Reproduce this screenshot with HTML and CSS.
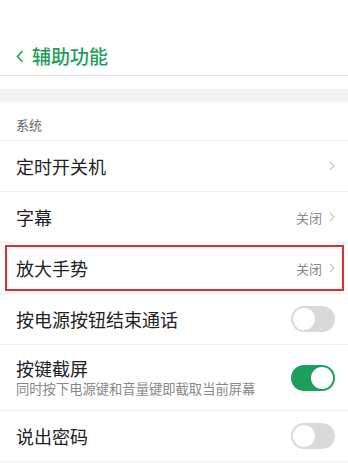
FILE: index.html
```html
<!DOCTYPE html>
<html lang="zh">
<head>
<meta charset="utf-8">
<link rel="stylesheet" href="styles.css">
</head>
<body>
<div class="page">
  <header class="topbar">
    <svg class="back" width="8" height="13" viewBox="0 0 8 13"><path d="M6.5 1 L1.5 6.5 L6.5 12" fill="none" stroke="#1f9d5c" stroke-width="1.6"/></svg>
    <span class="title">辅助功能</span>
  </header>
  <div class="spacer"></div>
  <div class="band"></div>
  <div class="section">系统</div>
  <div class="row">
    <span class="label">定时开关机</span>
    <span class="right"><svg class="chev" width="6" height="10" viewBox="0 0 6 10"><path d="M1 1 L5 5 L1 9" fill="none" stroke="#c4c4c4" stroke-width="1.1"/></svg></span>
  </div>
  <div class="row">
    <span class="label">字幕</span>
    <span class="right"><span class="value">关闭</span><svg class="chev" width="6" height="10" viewBox="0 0 6 10"><path d="M1 1 L5 5 L1 9" fill="none" stroke="#c4c4c4" stroke-width="1.1"/></svg></span>
  </div>
  <div class="row marked">
    <span class="label">放大手势</span>
    <span class="right"><span class="value">关闭</span><svg class="chev" width="6" height="10" viewBox="0 0 6 10"><path d="M1 1 L5 5 L1 9" fill="none" stroke="#c4c4c4" stroke-width="1.1"/></svg></span>
  </div>
  <div class="row">
    <span class="label">按电源按钮结束通话</span>
    <span class="toggle"><span class="knob"></span></span>
  </div>
  <div class="row tall">
    <span class="texts"><span class="label">按键截屏</span><span class="sub">同时按下电源键和音量键即截取当前屏幕</span></span>
    <span class="toggle on"><span class="knob"></span></span>
  </div>
  <div class="row">
    <span class="label">说出密码</span>
    <span class="toggle"><span class="knob"></span></span>
  </div>
</div>
</body>
</html>
```
FILE: styles.css
```css
* { box-sizing: border-box; }
html, body { margin: 0; padding: 0; background: #fff; }
body { font-family: "Noto Sans CJK SC", "Noto Sans", sans-serif; color: #222; width: 348px; height: 463px; overflow: hidden; }
.page { display: flex; flex-direction: column; }
.topbar { height: 76px; padding: 44px 0 0 16px; display: flex; align-items: flex-start; border-bottom: 1px solid #e6e6e6; }
.back { margin-top: 6px; }
.title { margin-left: 8px; font-size: 19px; line-height: 24px; font-weight: 500; color: #1f9d5c; }
.spacer { height: 13px; }
.band { height: 13px; background: #f2f2f2; }
.section { height: 39px; padding: 14px 0 0 16px; font-size: 13px; line-height: 18px; color: #666; border-bottom: 1px solid #efefef; }
.row { position: relative; height: 51px; padding: 0 13px 0 16px; display: flex; align-items: center; justify-content: space-between; border-bottom: 1px solid #efefef; }
.row.tall { height: 66px; }
.label { font-size: 18px; line-height: 24px; color: #222; }
.texts { display: flex; flex-direction: column; }
.texts .label { line-height: 22px; }
.sub { font-size: 13.3px; line-height: 18px; color: #888; margin-top: 1px; }
.right { display: flex; align-items: center; gap: 7px; }
.value { font-size: 13px; color: #888; }
.chev { display: block; }
.toggle { width: 44px; height: 26px; border-radius: 13px; background: #d9d9d9; position: relative; flex: none; }
.toggle .knob { position: absolute; top: 2px; left: 2px; width: 22px; height: 22px; border-radius: 50%; background: #fff; }
.toggle.on { background: #1f9d5c; }
.toggle.on .knob { left: 20px; }
.marked::after { content: ""; position: absolute; left: 5px; right: 4px; top: 2px; bottom: 2px; border: 2px solid #e8292f; }
```
